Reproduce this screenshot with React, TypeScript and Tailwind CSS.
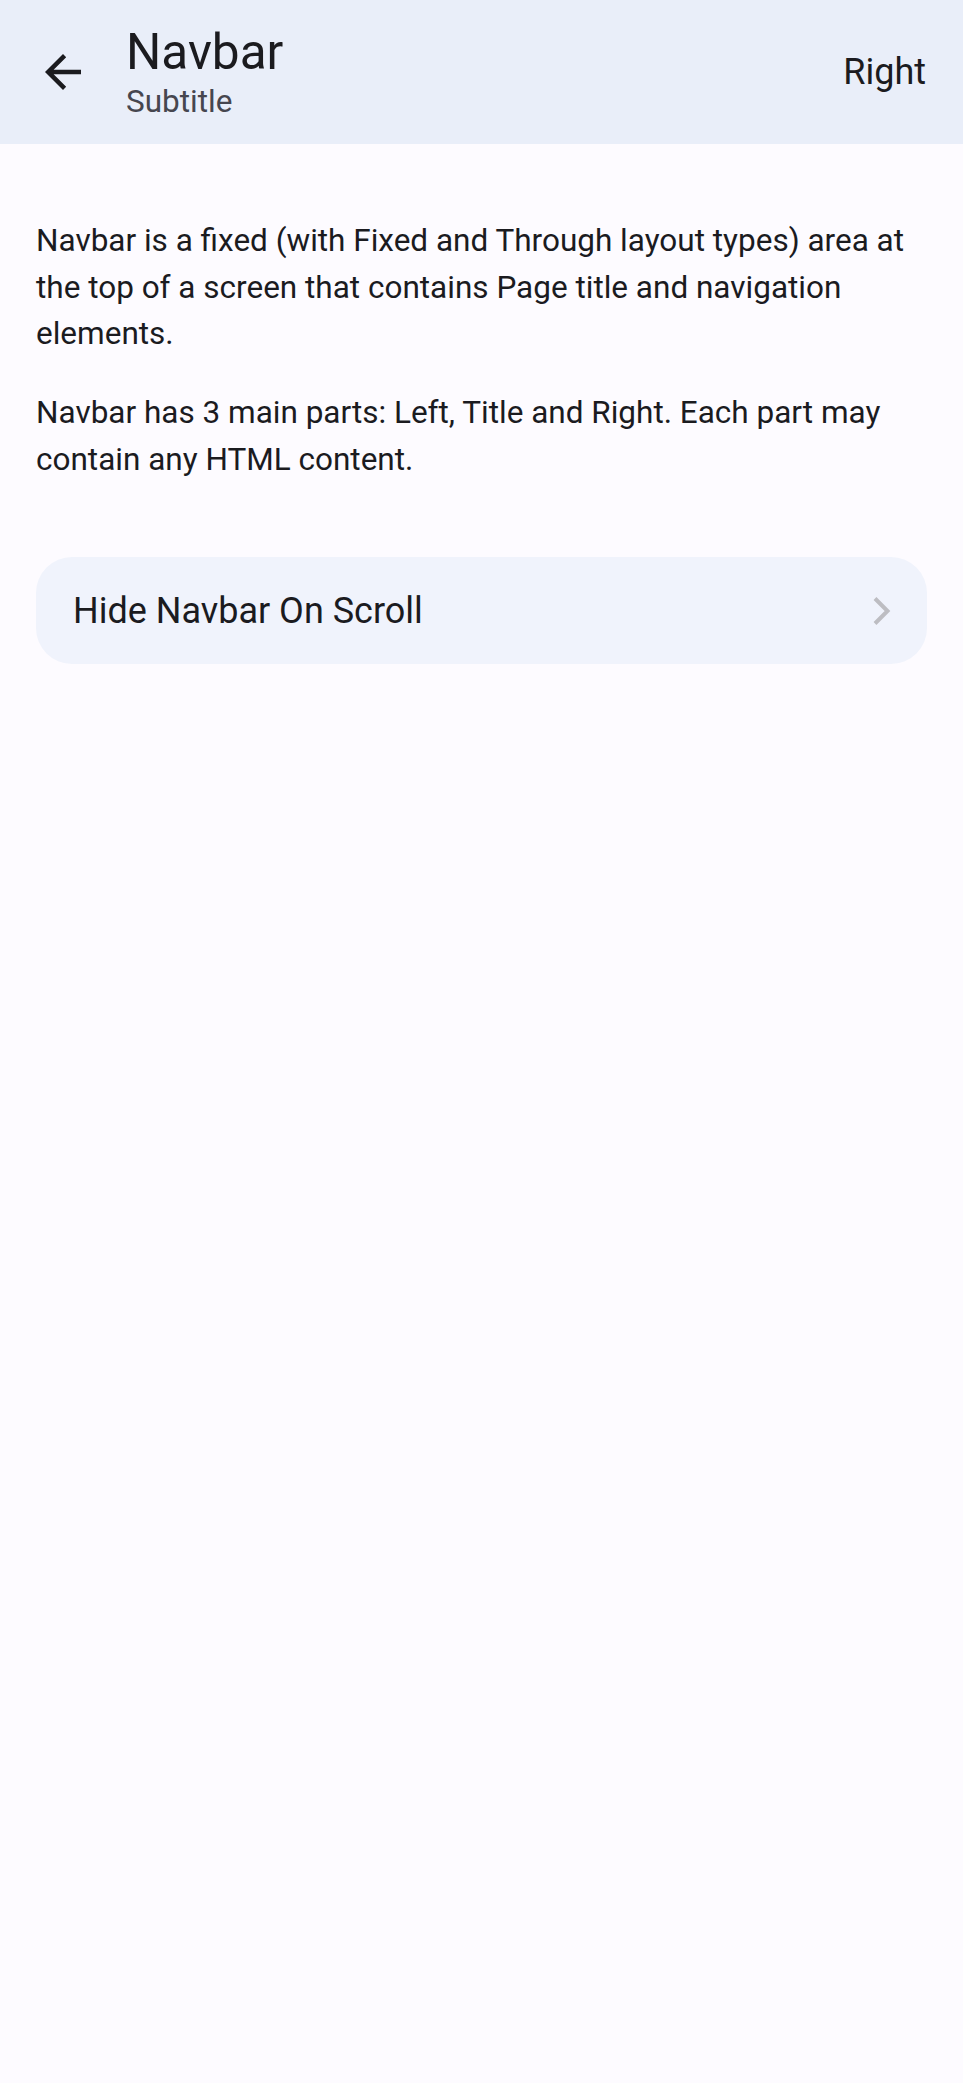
import { FC } from 'react';

const BackIcon: FC = () => (
  <svg width="54" height="54" viewBox="0 0 24 24" fill="currentColor">
    <path d="M20 11H7.83l5.59-5.59L12 4l-8 8 8 8 1.41-1.41L7.83 13H20v-2z" />
  </svg>
);

const Chevron: FC = () => (
  <svg width="20" height="30" viewBox="0 0 20 30" fill="none">
    <path d="M3 2.5 L15.5 15 L3 27.5" stroke="#bdbdc2" strokeWidth="4" />
  </svg>
);

const App: FC = () => {
  return (
    <div className="min-h-screen bg-[#fdfbff] text-[#1b1b1f] font-['Roboto',sans-serif]">
      <nav className="flex items-center justify-between h-[144px] bg-[#e9eef9] pl-[36px] pr-[37px]">
        <div className="flex items-center gap-[36px]">
          <BackIcon />
          <div className="flex flex-col pt-[4px]">
            <h1 className="text-[49.5px] leading-[56px]">Navbar</h1>
            <span className="text-[31.5px] leading-[44px] text-[#46464f]">Subtitle</span>
          </div>
        </div>
        <span className="text-[36px] leading-[42px]">Right</span>
      </nav>

      <div className="px-[36px] pt-[74px] text-[31.5px] leading-[46.5px]">
        <p>
          Navbar is a fixed (with Fixed and Through layout types) area at the top of a screen that
          contains Page title and navigation elements.
        </p>
        <p className="mt-[32.5px]">
          Navbar has 3 main parts: Left, Title and Right. Each part may contain any HTML content.
        </p>
      </div>

      <div className="mx-[36px] mt-[74px] flex items-center justify-between h-[107px] rounded-[36px] bg-[#f0f3fc] pl-[37px] pr-[35px]">
        <span className="text-[36px] leading-[42px]">Hide Navbar On Scroll</span>
        <Chevron />
      </div>
    </div>
  );
};

export default App;
